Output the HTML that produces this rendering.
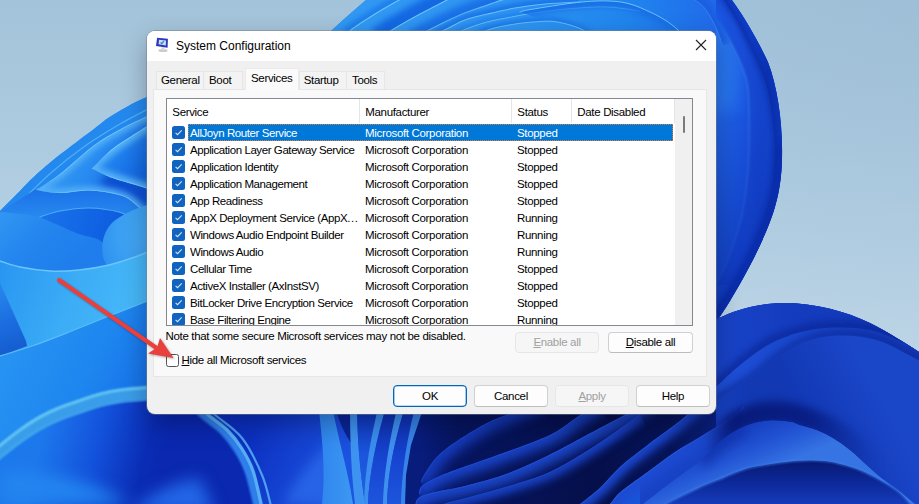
<!DOCTYPE html>
<html><head><meta charset="utf-8"><title>System Configuration</title>
<style>
html,body{margin:0;padding:0;}
body{width:919px;height:504px;overflow:hidden;position:relative;background:#b3cde2;font-family:"Liberation Sans",sans-serif;font-size:11.5px;letter-spacing:-0.33px;color:#000;}
#wall,#arrow{position:absolute;left:0;top:0;width:919px;height:504px;}
#arrow{z-index:5;pointer-events:none;}
#dlg{position:absolute;left:147px;top:31px;width:569px;height:382.5px;background:#f0f0f0;border-radius:8px;box-shadow:0 0 0 1px rgba(120,130,140,.5),0 10px 26px rgba(0,0,20,.3);overflow:hidden;}
#title{position:absolute;left:0;top:0;width:100%;height:30px;background:#fff;}
#title .ico{position:absolute;left:0;top:0;}
#title .t{position:absolute;left:29px;top:8px;font-size:12px;letter-spacing:0;}
#title .x{position:absolute;left:548px;top:8px;}
.tab{position:absolute;top:40px;height:19px;border:1px solid #e6e6e6;border-bottom:none;background:#f3f3f3;box-sizing:border-box;text-align:left;line-height:17px;}
.tab.sel{top:37px;height:22px;background:#fafafa;z-index:2;line-height:18px;border-color:#ebebeb;}
#panel{position:absolute;left:6px;top:58px;width:554px;height:288px;background:#f9f9f9;border:1px solid #e6e6e6;box-sizing:border-box;}
#list{position:absolute;left:19px;top:67px;width:527px;height:228px;background:#fff;border:1px solid #828790;box-sizing:border-box;overflow:hidden;}
.hd{position:absolute;top:0;height:24px;line-height:26px;border-right:1px solid #e5e5e5;box-sizing:border-box;padding-left:5.3px;}
.row{position:absolute;left:0;height:17px;width:508px;line-height:17px;white-space:nowrap;}
.row span{position:absolute;top:.7px;z-index:1;}
.row .cb{position:absolute;left:5px;top:2px;width:13px;height:13px;border-radius:2.5px;background:#1163c0;}
.row .cb svg{position:absolute;left:0;top:0;}
.row .hl{display:none;}
.row.sel .hl{display:block;position:absolute;left:21px;top:0;width:485px;height:17px;background:#0078d7;box-sizing:border-box;border:1px dotted #e07b39;}
.row.sel span{color:#fff;}
.c1{left:23px;letter-spacing:-.42px}.c2{left:198px}.c3{left:350px}
#sb{position:absolute;left:508px;top:0;width:17px;height:226px;background:#f0f0f0;}
#sb i{position:absolute;left:8px;top:17px;width:2px;height:17px;background:#7a7a7a;border-radius:1px;}
.note{position:absolute;left:18.5px;top:299px;white-space:nowrap;}
.hcb{position:absolute;left:19px;top:323px;width:13px;height:13px;box-sizing:border-box;border:1px solid #555;border-radius:2.5px;background:#fff;}
.hide{position:absolute;left:34.500px;top:322.7px;white-space:nowrap;}
.sep{position:absolute;left:0;top:341px;width:100%;height:0;}
.btn{position:absolute;height:21px;border:1px solid #d0d0d0;border-bottom-color:#bdbdbd;border-radius:4px;background:#fdfdfd;box-sizing:border-box;text-align:center;line-height:19px;}
.btn.dis{color:#a0a0a0;background:#f6f6f6;border-color:#e6e6e6;}
.btn.def{border:1px solid #0067c0;box-shadow:inset 0 0 0 .35px #0067c0;}
.btn.b2{height:22px;line-height:20.500px;}
u{text-decoration-thickness:1px;text-underline-offset:1px;}
.el{font-style:normal;letter-spacing:.6px;}

</style></head><body>
<svg id="wall" viewBox="0 0 919 504">
<defs>
<filter id="b1" filterUnits="userSpaceOnUse" x="-60" y="-60" width="1040" height="624" color-interpolation-filters="sRGB"><feGaussianBlur stdDeviation="1"/></filter>
<filter id="b2" filterUnits="userSpaceOnUse" x="-60" y="-60" width="1040" height="624" color-interpolation-filters="sRGB"><feGaussianBlur stdDeviation="2"/></filter>
<filter id="b3" filterUnits="userSpaceOnUse" x="-60" y="-60" width="1040" height="624" color-interpolation-filters="sRGB"><feGaussianBlur stdDeviation="3"/></filter>
<filter id="b4" filterUnits="userSpaceOnUse" x="-60" y="-60" width="1040" height="624" color-interpolation-filters="sRGB"><feGaussianBlur stdDeviation="4"/></filter>
<filter id="b6" filterUnits="userSpaceOnUse" x="-60" y="-60" width="1040" height="624" color-interpolation-filters="sRGB"><feGaussianBlur stdDeviation="6"/></filter>
<filter id="b8" filterUnits="userSpaceOnUse" x="-60" y="-60" width="1040" height="624" color-interpolation-filters="sRGB"><feGaussianBlur stdDeviation="8"/></filter>
<filter id="b14" filterUnits="userSpaceOnUse" x="-60" y="-60" width="1040" height="624" color-interpolation-filters="sRGB"><feGaussianBlur stdDeviation="14"/></filter>
<filter id="b20" filterUnits="userSpaceOnUse" x="-60" y="-60" width="1040" height="624" color-interpolation-filters="sRGB"><feGaussianBlur stdDeviation="20"/></filter>
<clipPath id="bloom"><path d="M366 0L732 0C748 22 760 45 768 62C778 88 783 125 782 160C781 200 770 225 754 258C740 285 728 305 719 318C735 310 760 303 783 303C815 303 845 311 870 323C890 333 905 343 919 352L919 504L0 504L0 211C8 203 14 197 20 191C30 180 38 173 46 166C60 154 70 147 79 140C90 132 98 126 105 120C120 110 135 102 147 97L331 31C342 21 354 10 366 0Z"/></clipPath>
<linearGradient id="bg" gradientUnits="userSpaceOnUse" x1="0" y1="0" x2="0" y2="504"><stop offset="0" stop-color="#a3c3da"/><stop offset="0.3" stop-color="#adcbe0"/><stop offset="0.6" stop-color="#bad3e5"/><stop offset="0.75" stop-color="#c0d7e7"/><stop offset="1" stop-color="#c0d7e7"/></linearGradient>
<radialGradient id="bg2" gradientUnits="userSpaceOnUse" cx="919" cy="0" r="380"><stop offset="0" stop-color="#98b9d3" stop-opacity="0.45"/><stop offset="1" stop-color="#98b9d3" stop-opacity="0"/></radialGradient>
<linearGradient id="base" gradientUnits="userSpaceOnUse" x1="0" y1="0" x2="919" y2="0"><stop offset="0" stop-color="#2289ef"/><stop offset="0.35" stop-color="#1f80ee"/><stop offset="0.6" stop-color="#1a5fe0"/><stop offset="1" stop-color="#103ac0"/></linearGradient>
<linearGradient id="p2" gradientUnits="userSpaceOnUse" x1="40" y1="150" x2="140" y2="215"><stop offset="0" stop-color="#3a9ef4"/><stop offset="0.4" stop-color="#2a8ef1"/><stop offset="0.75" stop-color="#1a70e8"/><stop offset="1" stop-color="#1260e0"/></linearGradient>
<clipPath id="c1"><path d="M36 190C40.0 187.3 50.5 181.3 60.0 174.0C69.5 166.7 83.2 153.3 93.0 146.0C102.8 138.7 111.3 134.3 119.0 130.0C126.7 125.7 132.2 123.3 139.0 120.0C145.8 116.7 156.5 111.7 160.0 110.0L160 110L160 228L160 228C155.8 224.0 141.8 209.5 135.0 204.0C128.2 198.5 126.7 197.2 119.0 195.0C111.3 192.8 98.8 190.8 89.0 190.5C79.2 190.2 68.8 193.1 60.0 193.0C51.2 192.9 40.0 190.5 36.0 190.0Z"/></clipPath>
<linearGradient id="u2" gradientUnits="userSpaceOnUse" x1="0" y1="190" x2="0" y2="222"><stop offset="0" stop-color="#1b72e8"/><stop offset="1" stop-color="#2a8cf0"/></linearGradient>
<linearGradient id="p1" gradientUnits="userSpaceOnUse" x1="92" y1="150" x2="160" y2="195"><stop offset="0" stop-color="#3a9cf4"/><stop offset="0.3" stop-color="#2080ee"/><stop offset="0.7" stop-color="#1266e2"/><stop offset="1" stop-color="#0e58da"/></linearGradient>
<clipPath id="c2"><path d="M92 168.5C95.2 165.4 104.7 155.2 111.0 150.0C117.3 144.8 121.8 142.3 130.0 137.0C138.2 131.7 155.0 121.2 160.0 118.0L160 118L160 193L160 193C156.5 191.8 147.2 188.6 139.0 186.0C130.8 183.4 118.8 180.4 111.0 177.5C103.2 174.6 95.2 170.0 92.0 168.5Z"/></clipPath>
<linearGradient id="p4" gradientUnits="userSpaceOnUse" x1="0" y1="214" x2="60" y2="275"><stop offset="0" stop-color="#3196f2"/><stop offset="0.5" stop-color="#2385ee"/><stop offset="1" stop-color="#1f7eec"/></linearGradient>
<linearGradient id="p3" gradientUnits="userSpaceOnUse" x1="40" y1="215" x2="135" y2="245"><stop offset="0" stop-color="#1a74ea"/><stop offset="0.5" stop-color="#1165e4"/><stop offset="1" stop-color="#0d56da"/></linearGradient>
<radialGradient id="lobe" gradientUnits="userSpaceOnUse" cx="160" cy="235" r="60"><stop offset="0" stop-color="#49acf5"/><stop offset="0.7" stop-color="#3b9ff3"/><stop offset="1" stop-color="#2f92f0"/></radialGradient>
<linearGradient id="r1" gradientUnits="userSpaceOnUse" x1="0" y1="265" x2="150" y2="320"><stop offset="0" stop-color="#2896f1"/><stop offset="0.5" stop-color="#3cadf6"/><stop offset="1" stop-color="#49bbf9"/></linearGradient>
<linearGradient id="dw" gradientUnits="userSpaceOnUse" x1="0" y1="290" x2="20" y2="350"><stop offset="0" stop-color="#2684ec"/><stop offset="0.5" stop-color="#1c6ee0"/><stop offset="1" stop-color="#155cd0"/></linearGradient>
<linearGradient id="r2" gradientUnits="userSpaceOnUse" x1="20" y1="340" x2="170" y2="420"><stop offset="0" stop-color="#2692f2"/><stop offset="0.45" stop-color="#1e86ef"/><stop offset="0.8" stop-color="#1670e8"/><stop offset="1" stop-color="#0f5ce0"/></linearGradient>
<linearGradient id="r3" gradientUnits="userSpaceOnUse" x1="45" y1="425" x2="165" y2="455"><stop offset="0" stop-color="#1d78ec"/><stop offset="0.45" stop-color="#1352dc"/><stop offset="0.85" stop-color="#0a2cb4"/><stop offset="1" stop-color="#0a28b0"/></linearGradient>
<linearGradient id="bm" gradientUnits="userSpaceOnUse" x1="150" y1="410" x2="330" y2="504"><stop offset="0" stop-color="#0a2cbc"/><stop offset="0.5" stop-color="#0c30c0"/><stop offset="1" stop-color="#1d55e2"/></linearGradient>
<linearGradient id="s1" gradientUnits="userSpaceOnUse" x1="320" y1="0" x2="352" y2="0"><stop offset="0" stop-color="#2f86ee"/><stop offset="1" stop-color="#3c97f2"/></linearGradient>
<linearGradient id="s2" gradientUnits="userSpaceOnUse" x1="0" y1="400" x2="0" y2="504"><stop offset="0" stop-color="#0c2cb0"/><stop offset="0.5" stop-color="#1a54dc"/><stop offset="1" stop-color="#2062e4"/></linearGradient>
<linearGradient id="s3" gradientUnits="userSpaceOnUse" x1="0" y1="400" x2="0" y2="504"><stop offset="0" stop-color="#0b2aa8"/><stop offset="0.6" stop-color="#1746d2"/><stop offset="1" stop-color="#1d55dc"/></linearGradient>
<linearGradient id="br" gradientUnits="userSpaceOnUse" x1="560" y1="504" x2="860" y2="320"><stop offset="0" stop-color="#07165c"/><stop offset="0.3" stop-color="#0a2290"/><stop offset="0.6" stop-color="#1034b2"/><stop offset="1" stop-color="#143cc0"/></linearGradient>
<linearGradient id="tl" gradientUnits="userSpaceOnUse" x1="700" y1="0" x2="919" y2="0"><stop offset="0" stop-color="#1a46cc"/><stop offset="0.4" stop-color="#143cbe"/><stop offset="1" stop-color="#1238b8"/></linearGradient>
<linearGradient id="sp" gradientUnits="userSpaceOnUse" x1="716" y1="0" x2="919" y2="0"><stop offset="0" stop-color="#1f50d8"/><stop offset="0.35" stop-color="#1a48cc"/><stop offset="1" stop-color="#1238b6"/></linearGradient>
<linearGradient id="tp" gradientUnits="userSpaceOnUse" x1="730" y1="430" x2="860" y2="360"><stop offset="0" stop-color="#1842c4"/><stop offset="0.25" stop-color="#1238b2"/><stop offset="0.5" stop-color="#1238b4"/><stop offset="1" stop-color="#1a46c8"/></linearGradient>
<linearGradient id="nz" gradientUnits="userSpaceOnUse" x1="420" y1="0" x2="716" y2="0"><stop offset="0" stop-color="#081c7c"/><stop offset="0.12" stop-color="#061560"/><stop offset="0.6" stop-color="#050f4a"/><stop offset="0.85" stop-color="#061458"/><stop offset="1" stop-color="#0a2080"/></linearGradient>
<clipPath id="c3"><path d="M421 482C421.5 480.8 421.5 479.0 424.0 475.0C426.5 471.0 431.0 463.3 436.0 458.0C441.0 452.7 445.5 448.8 454.0 443.0C462.5 437.2 477.8 427.8 487.0 423.0C496.2 418.2 500.2 417.5 509.0 414.0C517.8 410.5 534.8 404.0 540.0 402.0L540 402L840 1002L840 1002L809 1014L787 1023L754 1043L736 1058L724 1075L721 1082Z"/></clipPath>
<clipPath id="c4"><path d="M419 494C419.5 492.7 418.5 489.0 422.0 486.0C425.5 483.0 432.8 479.2 440.0 476.0C447.2 472.8 453.5 470.8 465.0 466.6C476.5 462.4 494.5 456.4 509.0 451.0C523.5 445.6 540.5 439.8 552.0 434.0C563.5 428.2 570.0 421.5 578.0 416.5C586.0 411.5 596.3 406.1 600.0 404.0L600 404L900 1004L900 1004L878 1016.5L852 1034L809 1051L765 1066.6L740 1076L722 1086L719 1094Z"/></clipPath>
<clipPath id="c5"><path d="M415 506C415.8 504.5 415.4 499.5 419.6 497.0C423.8 494.5 432.4 492.8 440.0 491.0C447.6 489.2 453.5 489.0 465.0 486.0C476.5 483.0 494.5 478.4 509.0 473.0C523.5 467.6 539.3 459.7 552.0 453.5C564.7 447.3 573.3 442.2 585.0 436.0C596.7 429.8 611.2 422.2 622.0 416.5C632.8 410.8 645.3 404.4 650.0 402.0L650 402L950 1002L950 1002L922 1016.5L885 1036L852 1053.5L809 1073L765 1086L740 1091L719.6 1097L715 1106Z"/></clipPath>
<clipPath id="c6"><path d="M430 512C432.2 510.7 436.8 506.5 443.5 504.0C450.2 501.5 459.1 500.0 470.0 497.0C480.9 494.0 495.3 490.3 509.0 486.0C522.7 481.7 536.8 478.2 552.0 471.0C567.2 463.8 585.3 452.1 600.0 442.6C614.7 433.1 633.3 418.8 640.0 414.0L640 414L940 1014L940 1014L900 1042.6L852 1071L809 1086L770 1097L743.5 1104L730 1112Z"/></clipPath>
<clipPath id="c7"><path d="M560 520C563.3 517.3 573.3 509.3 580.0 504.0C586.7 498.7 593.3 494.2 600.0 488.0C606.7 481.8 612.2 474.1 620.0 467.0C627.8 459.9 638.0 452.4 647.0 445.5C656.0 438.6 667.3 430.7 674.0 425.6C680.7 420.5 682.7 418.6 687.0 415.0C691.3 411.4 697.8 405.8 700.0 404.0L700 404L1000 1004L1000 1004L987 1015L974 1025.6L947 1045.5L920 1067L900 1088L880 1104L860 1120Z"/></clipPath>
<clipPath id="c8"><path d="M596 516C598.3 514.0 606.0 507.9 610.0 504.0C614.0 500.1 613.8 497.7 620.0 492.5C626.2 487.3 638.0 479.2 647.0 472.6C656.0 466.0 665.0 458.7 674.0 452.7C683.0 446.7 693.2 441.3 701.0 436.5C708.8 431.7 715.0 427.9 721.0 424.0C727.0 420.1 733.2 416.0 737.0 413.0C740.8 410.0 742.8 407.2 744.0 406.0L744 406L1044 1006L1044 1006L1037 1013L1021 1024L1001 1036.5L974 1052.7L947 1072.6L920 1092.5L910 1104L896 1116Z"/></clipPath>
<linearGradient id="shg" gradientUnits="userSpaceOnUse" x1="705" y1="0" x2="880" y2="0"><stop offset="0" stop-color="#081a78" stop-opacity="0.0"/><stop offset="0.15" stop-color="#081a78" stop-opacity="1"/><stop offset="0.6" stop-color="#081c80" stop-opacity="0.9"/><stop offset="1" stop-color="#0a2490" stop-opacity="0"/></linearGradient>
<linearGradient id="lp" gradientUnits="userSpaceOnUse" x1="755" y1="420" x2="775" y2="468"><stop offset="0" stop-color="#153ec0"/><stop offset="0.5" stop-color="#2254d4"/><stop offset="1" stop-color="#3674e4"/></linearGradient>
<clipPath id="c9"><path d="M625 520C628.0 517.3 634.8 510.7 643.0 504.0C651.2 497.3 664.3 487.3 674.0 480.0C683.7 472.7 693.0 466.7 701.0 460.0C709.0 453.3 714.7 445.7 722.0 440.0C729.3 434.3 737.3 429.2 745.0 426.0C752.7 422.8 760.4 421.2 768.0 420.5C775.6 419.8 785.2 420.9 790.5 421.7C795.8 422.4 795.6 423.6 800.0 425.0C804.4 426.4 811.2 427.8 816.7 430.0C822.2 432.2 827.5 434.7 833.0 438.0C838.5 441.3 844.4 445.5 850.0 450.0C855.6 454.5 861.7 460.6 866.7 465.0C871.7 469.4 875.6 473.1 880.0 476.7C884.4 480.3 888.3 483.1 893.0 486.7C897.7 490.2 903.5 494.4 908.0 498.0C912.5 501.6 918.0 506.3 920.0 508.0L920 530L625 530Z"/></clipPath>
<linearGradient id="bl" gradientUnits="userSpaceOnUse" x1="0" y1="462" x2="0" y2="506"><stop offset="0" stop-color="#081a74"/><stop offset="0.45" stop-color="#0c2898"/><stop offset="1" stop-color="#163cbc"/></linearGradient>
<clipPath id="rlc"><path d="M690 -10L732 0C748 22 760 45 768 62C778 88 783 125 782 160C781 200 770 225 754 258C740 285 728 305 719 318L690 335Z"/></clipPath>
<linearGradient id="rl" gradientUnits="userSpaceOnUse" x1="716" y1="0" x2="785" y2="0"><stop offset="0" stop-color="#2268ea"/><stop offset="0.35" stop-color="#1c58e2"/><stop offset="0.6" stop-color="#1648d4"/><stop offset="1" stop-color="#0e36bc"/></linearGradient>
<linearGradient id="e3" gradientUnits="userSpaceOnUse" x1="735" y1="0" x2="760" y2="0"><stop offset="0" stop-color="#1a50dc"/><stop offset="1" stop-color="#1444cc"/></linearGradient>
<linearGradient id="e2" gradientUnits="userSpaceOnUse" x1="750" y1="0" x2="785" y2="0"><stop offset="0" stop-color="#0f3cc4"/><stop offset="0.5" stop-color="#0c32b4"/><stop offset="1" stop-color="#0d36ba"/></linearGradient>
<linearGradient id="rld" gradientUnits="userSpaceOnUse" x1="0" y1="110" x2="0" y2="320"><stop offset="0" stop-color="#0c32b4" stop-opacity="0"/><stop offset="0.5" stop-color="#0c32b4" stop-opacity="0.45"/><stop offset="1" stop-color="#0b2eae" stop-opacity="0.8"/></linearGradient>
<linearGradient id="ts" gradientUnits="userSpaceOnUse" x1="330" y1="0" x2="735" y2="0"><stop offset="0" stop-color="#3199f3"/><stop offset="0.45" stop-color="#2f96f2"/><stop offset="0.72" stop-color="#2186ee"/><stop offset="0.86" stop-color="#2076ec"/><stop offset="0.95" stop-color="#226aea"/><stop offset="1" stop-color="#1c5ee4"/></linearGradient>
<clipPath id="c10"><path d="M343 40C344.3 38.3 345.7 34.3 351.0 30.0C356.3 25.7 367.0 19.0 375.0 14.0C383.0 9.0 393.5 3.2 399.0 0.0C404.5 -3.2 406.5 -4.2 408.0 -5.0L408 -5L208 -105L208 -105L199 -100L175 -86L151 -70L143 -60Z"/></clipPath>
<clipPath id="c11"><path d="M378 40C380.3 38.3 385.0 34.3 392.0 30.0C399.0 25.7 410.8 19.0 420.0 14.0C429.2 9.0 441.0 3.2 447.0 0.0C453.0 -3.2 454.5 -4.2 456.0 -5.0L456 -5L256 -105L256 -105L247 -100L220 -86L192 -70L178 -60Z"/></clipPath>
<clipPath id="c12"><path d="M412 40C414.8 38.3 421.0 34.2 429.0 30.0C437.0 25.8 450.2 19.2 460.0 15.0C469.8 10.8 480.6 7.5 487.6 5.0C494.6 2.5 497.4 1.5 502.0 0.0C506.6 -1.5 512.8 -3.3 515.0 -4.0L515 -4L315 -104L315 -104L302 -100L287.6 -95L260 -85L229 -70L212 -60Z"/></clipPath>
<clipPath id="c13"><path d="M425 40C428.2 38.3 437.8 33.3 444.5 30.0C451.2 26.7 457.8 22.7 465.0 20.0C472.2 17.3 479.3 16.0 487.6 14.0C495.9 12.0 505.4 9.7 515.0 8.0C524.6 6.3 534.2 5.0 545.0 4.0C555.8 3.0 574.2 2.3 580.0 2.0L580 2L480 -198L480 -198L445 -196L415 -192L387.6 -186L365 -180L344.5 -170L325 -160Z"/></clipPath>
<clipPath id="c14"><path d="M445 40C448.1 38.3 456.6 33.0 463.6 30.0C470.6 27.0 479.0 24.2 487.0 22.0C495.0 19.8 502.7 18.7 511.5 17.0C520.3 15.3 528.9 13.5 540.0 12.0C551.1 10.5 566.5 8.8 578.0 8.0C589.5 7.2 598.7 6.5 609.0 7.0C619.3 7.5 634.8 10.3 640.0 11.0L640 11L540 -189L540 -189L509 -193L478 -192L440 -188L411.5 -183L387 -178L363.6 -170L345 -160Z"/></clipPath>
<clipPath id="c15"><path d="M470 40C472.9 38.3 480.1 32.7 487.6 30.0C495.1 27.3 506.3 25.4 515.0 24.0C523.7 22.6 533.5 21.9 540.0 21.5C546.5 21.1 549.0 20.9 554.0 21.5C559.0 22.1 565.2 23.6 570.0 25.0C574.8 26.4 578.8 27.8 583.0 30.0C587.2 32.2 593.0 36.7 595.0 38.0L595 38L595 -162L595 -162L583 -170L570 -175L554 -178.5L540 -178.5L515 -176L487.6 -170L470 -160Z"/></clipPath>
<clipPath id="c16"><path d="M520 12C521.7 11.6 520.3 11.2 530.0 9.6C539.7 8.0 564.8 3.8 578.0 2.4C591.2 1.0 600.3 0.7 609.0 1.0C617.7 1.3 623.2 2.2 630.0 4.0C636.8 5.8 644.2 9.3 650.0 12.0C655.8 14.7 660.3 17.0 665.0 20.0C669.7 23.0 674.2 26.3 678.0 30.0C681.8 33.7 686.3 40.0 688.0 42.0L688 42L988 142L988 142L978 130L965 120L950 112L930 104L909 101L878 102.4L830 109.6L820 112Z"/></clipPath>
<clipPath id="c17"><path d="M680 -8C682.5 -6.7 690.7 -3.0 695.0 0.0C699.3 3.0 702.3 5.0 706.0 10.0C709.7 15.0 714.3 24.2 717.0 30.0C719.7 35.8 721.2 42.5 722.0 45.0L722 45L1022 45L1022 45L1017 30L1006 10L995 0L980 -8Z"/></clipPath>
</defs>
<rect width="919" height="504" fill="url(#bg)"/>
<rect x="500" width="419" height="400" fill="url(#bg2)"/>
<g clip-path="url(#bloom)">
<rect width="919" height="504" fill="url(#base)"/>
<path d="M0 504L0 200L160 80L160 504Z" fill="#2489ef"/>
<path d="M0 226C4.2 221.3 16.3 207.0 25.0 198.0C33.7 189.0 42.0 180.7 52.0 172.0C62.0 163.3 73.7 154.0 85.0 146.0C96.3 138.0 109.2 130.3 120.0 124.0C130.8 117.7 145.0 110.7 150.0 108.0" fill="none" stroke="#5db6f7" stroke-width="1.2" stroke-linecap="round" opacity="0.8"/>
<path d="M36 189C40.0 189.7 51.2 193.0 60.0 193.0C68.8 193.0 79.2 189.0 89.0 189.0C98.8 189.0 111.3 190.7 119.0 193.0C126.7 195.3 129.8 198.5 135.0 203.0C140.2 207.5 147.5 217.2 150.0 220.0L150 230L0 230L0 212Z" fill="url(#u2)"/>
<g clip-path="url(#c1)"><path d="M36 190C40.0 187.3 50.5 181.3 60.0 174.0C69.5 166.7 83.2 153.3 93.0 146.0C102.8 138.7 111.3 134.3 119.0 130.0C126.7 125.7 132.2 123.3 139.0 120.0C145.8 116.7 156.5 111.7 160.0 110.0L160 110L160 228L160 228C155.8 224.0 141.8 209.5 135.0 204.0C128.2 198.5 126.7 197.2 119.0 195.0C111.3 192.8 98.8 190.8 89.0 190.5C79.2 190.2 68.8 193.1 60.0 193.0C51.2 192.9 40.0 190.5 36.0 190.0Z" fill="url(#p2)"/><path d="M104 178C120 186 140 192 165 200" fill="none" stroke="#0d50d2" stroke-width="20" filter="url(#b4)"/><path d="M160 110C156.5 111.7 145.8 116.7 139.0 120.0C132.2 123.3 126.7 125.7 119.0 130.0C111.3 134.3 102.8 138.7 93.0 146.0C83.2 153.3 69.5 166.7 60.0 174.0C50.5 181.3 36.0 186.8 36.0 190.0C36.0 193.2 51.2 192.9 60.0 193.0C68.8 193.1 79.2 190.2 89.0 190.5C98.8 190.8 111.3 192.8 119.0 195.0C126.7 197.2 128.2 198.5 135.0 204.0C141.8 209.5 155.8 224.0 160.0 228.0" fill="none" stroke="#56b2f7" stroke-width="8" filter="url(#b3)"/><path d="M160 110C156.5 111.7 145.8 116.7 139.0 120.0C132.2 123.3 126.7 125.7 119.0 130.0C111.3 134.3 102.8 138.7 93.0 146.0C83.2 153.3 69.5 166.7 60.0 174.0C50.5 181.3 36.0 186.8 36.0 190.0C36.0 193.2 51.2 192.9 60.0 193.0C68.8 193.1 79.2 190.2 89.0 190.5C98.8 190.8 111.3 192.8 119.0 195.0C126.7 197.2 128.2 198.5 135.0 204.0C141.8 209.5 155.8 224.0 160.0 228.0" fill="none" stroke="#6cc2f9" stroke-width="1.6"/></g>
<g clip-path="url(#c2)"><path d="M92 168.5C95.2 165.4 104.7 155.2 111.0 150.0C117.3 144.8 121.8 142.3 130.0 137.0C138.2 131.7 155.0 121.2 160.0 118.0L160 118L160 193L160 193C156.5 191.8 147.2 188.6 139.0 186.0C130.8 183.4 118.8 180.4 111.0 177.5C103.2 174.6 95.2 170.0 92.0 168.5Z" fill="url(#p1)"/><path d="M160 118C155.0 121.2 138.2 131.7 130.0 137.0C121.8 142.3 117.3 144.8 111.0 150.0C104.7 155.2 92.0 163.9 92.0 168.5C92.0 173.1 103.2 174.6 111.0 177.5C118.8 180.4 130.8 183.4 139.0 186.0C147.2 188.6 156.5 191.8 160.0 193.0" fill="none" stroke="#58b4f7" stroke-width="10" filter="url(#b3)"/><path d="M160 118C155.0 121.2 138.2 131.7 130.0 137.0C121.8 142.3 117.3 144.8 111.0 150.0C104.7 155.2 92.0 163.9 92.0 168.5C92.0 173.1 103.2 174.6 111.0 177.5C118.8 180.4 130.8 183.4 139.0 186.0C147.2 188.6 156.5 191.8 160.0 193.0" fill="none" stroke="#74c8fa" stroke-width="1.8"/></g>
<path d="M0 212C3.3 212.3 13.3 213.2 20.0 214.0C26.7 214.8 33.3 215.0 40.0 217.0C46.7 219.0 53.5 223.2 60.0 226.0C66.5 228.8 72.5 231.7 79.0 234.0C85.5 236.3 92.2 237.3 99.0 240.0C105.8 242.7 116.5 248.3 120.0 250.0L160 250L160 275L0 275Z" fill="url(#p4)"/>
<path d="M40 217C43.3 216.0 51.8 212.5 60.0 211.0C68.2 209.5 79.2 207.8 89.0 208.0C98.8 208.2 111.3 210.0 119.0 212.0C126.7 214.0 129.8 216.7 135.0 220.0C140.2 223.3 147.5 230.0 150.0 232.0L150 260L110 250L110 250C108.2 248.3 104.2 242.7 99.0 240.0C93.8 237.3 85.5 236.3 79.0 234.0C72.5 231.7 66.5 228.8 60.0 226.0C53.5 223.2 43.3 218.5 40.0 217.0Z" fill="url(#p3)"/>
<path d="M40 217C43.3 216.0 51.8 212.5 60.0 211.0C68.2 209.5 79.2 207.8 89.0 208.0C98.8 208.2 111.3 210.0 119.0 212.0C126.7 214.0 132.3 218.7 135.0 220.0" fill="none" stroke="#4eaaf5" stroke-width="1.2" stroke-linecap="round"/>
<path d="M160 200C158.3 200.7 155.2 202.0 150.0 204.0C144.8 206.0 135.5 208.7 129.0 212.0C122.5 215.3 115.3 219.3 111.0 224.0C106.7 228.7 104.3 234.7 103.0 240.0C101.7 245.3 102.3 251.8 103.0 256.0C103.7 260.2 105.0 261.8 107.0 265.0C109.0 268.2 113.7 273.3 115.0 275.0L160 275Z" fill="url(#lobe)"/>
<path d="M0 261C3.3 262.0 11.7 265.3 20.0 267.0C28.3 268.7 40.2 270.5 50.0 271.0C59.8 271.5 69.2 271.0 79.0 270.0C88.8 269.0 99.7 267.2 109.0 265.0C118.3 262.8 126.5 260.0 135.0 257.0C143.5 254.0 155.8 248.7 160.0 247.0L160 360L0 360Z" fill="url(#r1)"/>
<path d="M0 261C3.3 262.0 11.7 265.3 20.0 267.0C28.3 268.7 40.2 270.5 50.0 271.0C59.8 271.5 69.2 271.0 79.0 270.0C88.8 269.0 99.7 267.2 109.0 265.0C118.3 262.8 126.5 260.0 135.0 257.0C143.5 254.0 155.8 248.7 160.0 247.0" fill="none" stroke="#6cc6fa" stroke-width="1.5" stroke-linecap="round"/>
<path d="M-2 282L0 283L26 341L27 346L-2 357Z" fill="url(#dw)"/>
<path d="M0 356C5.3 354.3 20.5 350.0 32.0 346.0C43.5 342.0 56.2 337.0 69.0 332.0C81.8 327.0 93.8 322.0 109.0 316.0C124.2 310.0 151.5 299.3 160.0 296.0L160 460L0 460Z" fill="url(#r2)"/>
<path d="M0 356C5.3 354.3 20.5 350.0 32.0 346.0C43.5 342.0 56.2 337.0 69.0 332.0C81.8 327.0 93.8 322.0 109.0 316.0C124.2 310.0 151.5 299.3 160.0 296.0" fill="none" stroke="#5cbcf8" stroke-width="1.3" stroke-linecap="round"/>
<path d="M0 450C6.7 445.0 26.7 427.7 40.0 420.0C53.3 412.3 66.7 408.3 80.0 404.0C93.3 399.7 106.7 396.3 120.0 394.0C133.3 391.7 145.0 390.3 160.0 390.0C175.0 389.7 201.7 391.7 210.0 392.0L260 504L0 504Z" fill="url(#r3)"/>
<path d="M0 504L0 470C40 470 90 480 130 504Z" fill="#2384ef" filter="url(#b8)"/>
<path d="M-6 456.5C-5.0 455.7 -4.3 454.9 0.0 451.5C4.3 448.1 13.3 440.8 20.0 436.0C26.7 431.2 33.3 426.8 40.0 423.0C46.7 419.2 53.3 416.2 60.0 413.5C66.7 410.8 73.3 408.8 80.0 406.5C86.7 404.2 93.3 401.8 100.0 400.0C106.7 398.2 112.2 397.1 120.0 396.0C127.8 394.9 140.3 394.0 147.0 393.5C153.7 393.0 157.8 393.1 160.0 393.0" fill="none" stroke="#3a9de9" stroke-width="13" stroke-linecap="round" filter="url(#b1)"/>
<path d="M-6 462.5C-5.0 461.7 -4.3 460.9 0.0 457.5C4.3 454.1 13.3 446.8 20.0 442.0C26.7 437.2 33.3 432.8 40.0 429.0C46.7 425.2 53.3 422.2 60.0 419.5C66.7 416.8 73.3 414.8 80.0 412.5C86.7 410.2 93.3 407.8 100.0 406.0C106.7 404.2 112.2 403.1 120.0 402.0C127.8 400.9 140.3 400.0 147.0 399.5C153.7 399.0 157.8 399.1 160.0 399.0" fill="none" stroke="#49adf0" stroke-width="1.6" stroke-linecap="round" filter="url(#b1)" opacity="0.8"/>
<path d="M-6 450.5C-5.0 449.7 -4.3 448.9 0.0 445.5C4.3 442.1 13.3 434.8 20.0 430.0C26.7 425.2 33.3 420.8 40.0 417.0C46.7 413.2 53.3 410.2 60.0 407.5C66.7 404.8 73.3 402.8 80.0 400.5C86.7 398.2 93.3 395.8 100.0 394.0C106.7 392.2 112.2 391.1 120.0 390.0C127.8 388.9 140.3 388.0 147.0 387.5C153.7 387.0 157.8 387.1 160.0 387.0" fill="none" stroke="#68ccf6" stroke-width="2.6" stroke-linecap="round" filter="url(#b1)"/>
<path d="M190 380L560 380L560 504L258 504C250 470 238 448 224 430C212 415 204 405 190 392Z" fill="url(#bm)"/>
<path d="M130 514C150 492 175 482 200 478L215 514Z" fill="#2266e6" filter="url(#b8)"/>
<path d="M190 400C192.2 402.3 197.5 409.0 203.0 414.0C208.5 419.0 217.2 424.2 223.0 430.0C228.8 435.8 233.7 442.2 238.0 449.0C242.3 455.8 245.7 461.5 249.0 471.0C252.3 480.5 256.5 500.2 258.0 506.0" fill="none" stroke="#2f7feb" stroke-width="9" stroke-linecap="round" filter="url(#b1)"/>
<path d="M196 400C197.8 402.3 201.8 409.0 207.0 414.0C212.2 419.0 221.2 424.2 227.0 430.0C232.8 435.8 237.7 442.2 242.0 449.0C246.3 455.8 249.8 461.5 253.0 471.0C256.2 480.5 260.1 500.2 261.5 506.0" fill="none" stroke="#58aef3" stroke-width="3.2" stroke-linecap="round"/>
<path d="M204 404C205.7 405.7 207.7 408.3 214.0 414.0C220.3 419.7 234.0 427.8 242.0 438.0C250.0 448.2 257.2 463.7 262.0 475.0C266.8 486.3 269.5 500.8 271.0 506.0" fill="none" stroke="#4d9ff0" stroke-width="2.2" stroke-linecap="round"/>
<path d="M285 504C295 480 312 462 332 440L345 504Z" fill="#2763e6" filter="url(#b6)"/>
<path d="M318 400C322 440 326 470 322 504L353 504C348 470 338 440 331 400Z" fill="url(#s1)"/>
<path d="M333 400L356 400L353 446C345 435 338 420 333 400Z" fill="#0a2596"/>
<path d="M350 400L357 400C357 440 360 470 365 504L355 504C351 470 350 440 350 400Z" fill="#3e93f0"/>
<path d="M357 400L384 400C372 440 366 470 366 504L365 504C360 470 357 440 357 400Z" fill="url(#s2)"/>
<path d="M380 400L388 400C376 440 369 475 368 504L364 504C365 470 370 440 380 400Z" fill="#3b8eee"/>
<path d="M388 400L402 400C390 440 385 475 385 504L368 504C369 475 376 440 388 400Z" fill="url(#s3)"/>
<path d="M399 400L407 400C393 445 388 475 387 504L383 504C384 475 388 445 399 400Z" fill="#3f90ee"/>
<path d="M407 400L420 400C407 445 403 475 403 504L387 504C388 475 393 445 407 400Z" fill="url(#s3)"/>
<path d="M417 400L426 400C411 445 406 475 405 504L401 504C402 475 405 445 417 400Z" fill="#3684e8"/>
<path d="M640 300L919 300L919 504L640 504Z" fill="url(#br)"/>
<path d="M700 330C703.2 328.0 711.0 321.8 719.0 318.0C727.0 314.2 737.3 309.5 748.0 307.0C758.7 304.5 771.2 303.3 783.0 303.0C794.8 302.7 807.0 302.8 819.0 305.0C831.0 307.2 843.0 311.2 855.0 316.0C867.0 320.8 879.3 327.5 891.0 334.0C902.7 340.5 919.3 351.5 925.0 355.0L925 510L700 510Z" fill="url(#tl)"/>
<path d="M716 385C720.0 381.3 731.2 370.2 740.0 363.0C748.8 355.8 758.8 347.5 769.0 342.0C779.2 336.5 790.2 332.8 801.0 330.0C811.8 327.2 822.5 325.3 834.0 325.0C845.5 324.7 855.8 324.2 870.0 328.0C884.2 331.8 910.8 344.7 919.0 348.0" fill="none" stroke="#0b2798" stroke-width="9" stroke-linecap="round" filter="url(#b3)" opacity="0.75"/>
<path d="M700 402C702.7 399.5 709.3 393.2 716.0 387.0C722.7 380.8 731.2 372.1 740.0 365.0C748.8 357.9 758.8 350.0 769.0 344.5C779.2 339.0 790.2 334.8 801.0 332.0C811.8 329.2 822.5 327.8 834.0 327.5C845.5 327.2 859.0 327.8 870.0 330.0C881.0 332.2 890.8 337.2 900.0 341.0C909.2 344.8 920.8 351.0 925.0 353.0L925 510L700 510Z" fill="url(#sp)"/>
<path d="M716 399C722.2 395.0 742.2 382.7 753.0 375.0C763.8 367.3 771.7 359.1 781.0 353.0C790.3 346.9 798.8 341.8 809.0 338.5C819.2 335.2 830.5 333.5 842.0 333.5C853.5 333.5 865.2 334.2 878.0 338.5C890.8 342.8 912.2 355.6 919.0 359.0" fill="none" stroke="#0b2694" stroke-width="6" stroke-linecap="round" filter="url(#b3)" opacity="0.7"/>
<path d="M640 470C645.0 465.0 660.0 449.3 670.0 440.0C680.0 430.7 692.3 420.5 700.0 414.0C707.7 407.5 707.2 407.2 716.0 401.0C724.8 394.8 742.2 384.7 753.0 377.0C763.8 369.3 771.7 361.1 781.0 355.0C790.3 348.9 798.8 343.7 809.0 340.5C819.2 337.3 830.5 335.6 842.0 335.6C853.5 335.6 867.5 337.6 878.0 340.5C888.5 343.4 897.2 349.1 905.0 353.0C912.8 356.9 921.7 362.2 925.0 364.0L925 510L640 510Z" fill="url(#tp)"/>
<path d="M405 510L406 475L411 445L426 400L716 400L716 427L716 427C713.5 428.6 708.0 432.2 701.0 436.5C694.0 440.8 683.0 446.7 674.0 452.7C665.0 458.7 656.0 466.0 647.0 472.6C638.0 479.2 626.2 487.3 620.0 492.5C613.8 497.7 614.0 500.1 610.0 504.0C606.0 507.9 598.3 514.0 596.0 516.0L596 516L405 516Z" fill="url(#nz)"/>
<g clip-path="url(#c3)"><path d="M421 482C421.5 480.8 421.5 479.0 424.0 475.0C426.5 471.0 431.0 463.3 436.0 458.0C441.0 452.7 445.5 448.8 454.0 443.0C462.5 437.2 477.8 427.8 487.0 423.0C496.2 418.2 500.2 417.5 509.0 414.0C517.8 410.5 534.8 404.0 540.0 402.0" fill="none" stroke="#163cbc" stroke-width="18" filter="url(#b6)" opacity="1"/><path d="M421 482C421.5 480.8 421.5 479.0 424.0 475.0C426.5 471.0 431.0 463.3 436.0 458.0C441.0 452.7 445.5 448.8 454.0 443.0C462.5 437.2 477.8 427.8 487.0 423.0C496.2 418.2 500.2 417.5 509.0 414.0C517.8 410.5 534.8 404.0 540.0 402.0" fill="none" stroke="#1a42c4" stroke-width="2"/></g>
<g clip-path="url(#c4)"><path d="M419 494C419.5 492.7 418.5 489.0 422.0 486.0C425.5 483.0 432.8 479.2 440.0 476.0C447.2 472.8 453.5 470.8 465.0 466.6C476.5 462.4 494.5 456.4 509.0 451.0C523.5 445.6 540.5 439.8 552.0 434.0C563.5 428.2 570.0 421.5 578.0 416.5C586.0 411.5 596.3 406.1 600.0 404.0" fill="none" stroke="#1a44c8" stroke-width="18" filter="url(#b6)" opacity="1"/><path d="M419 494C419.5 492.7 418.5 489.0 422.0 486.0C425.5 483.0 432.8 479.2 440.0 476.0C447.2 472.8 453.5 470.8 465.0 466.6C476.5 462.4 494.5 456.4 509.0 451.0C523.5 445.6 540.5 439.8 552.0 434.0C563.5 428.2 570.0 421.5 578.0 416.5C586.0 411.5 596.3 406.1 600.0 404.0" fill="none" stroke="#1e4ad0" stroke-width="2"/></g>
<g clip-path="url(#c5)"><path d="M415 506C415.8 504.5 415.4 499.5 419.6 497.0C423.8 494.5 432.4 492.8 440.0 491.0C447.6 489.2 453.5 489.0 465.0 486.0C476.5 483.0 494.5 478.4 509.0 473.0C523.5 467.6 539.3 459.7 552.0 453.5C564.7 447.3 573.3 442.2 585.0 436.0C596.7 429.8 611.2 422.2 622.0 416.5C632.8 410.8 645.3 404.4 650.0 402.0" fill="none" stroke="#1c48cc" stroke-width="18" filter="url(#b6)" opacity="1"/><path d="M415 506C415.8 504.5 415.4 499.5 419.6 497.0C423.8 494.5 432.4 492.8 440.0 491.0C447.6 489.2 453.5 489.0 465.0 486.0C476.5 483.0 494.5 478.4 509.0 473.0C523.5 467.6 539.3 459.7 552.0 453.5C564.7 447.3 573.3 442.2 585.0 436.0C596.7 429.8 611.2 422.2 622.0 416.5C632.8 410.8 645.3 404.4 650.0 402.0" fill="none" stroke="#204ed2" stroke-width="2"/></g>
<g clip-path="url(#c6)"><path d="M430 512C432.2 510.7 436.8 506.5 443.5 504.0C450.2 501.5 459.1 500.0 470.0 497.0C480.9 494.0 495.3 490.3 509.0 486.0C522.7 481.7 536.8 478.2 552.0 471.0C567.2 463.8 585.3 452.1 600.0 442.6C614.7 433.1 633.3 418.8 640.0 414.0" fill="none" stroke="#1840c0" stroke-width="14" filter="url(#b4)" opacity="1"/><path d="M430 512C432.2 510.7 436.8 506.5 443.5 504.0C450.2 501.5 459.1 500.0 470.0 497.0C480.9 494.0 495.3 490.3 509.0 486.0C522.7 481.7 536.8 478.2 552.0 471.0C567.2 463.8 585.3 452.1 600.0 442.6C614.7 433.1 633.3 418.8 640.0 414.0" fill="none" stroke="#1a44c4" stroke-width="2"/></g>
<g clip-path="url(#c7)"><path d="M560 520C563.3 517.3 573.3 509.3 580.0 504.0C586.7 498.7 593.3 494.2 600.0 488.0C606.7 481.8 612.2 474.1 620.0 467.0C627.8 459.9 638.0 452.4 647.0 445.5C656.0 438.6 667.3 430.7 674.0 425.6C680.7 420.5 682.7 418.6 687.0 415.0C691.3 411.4 697.8 405.8 700.0 404.0" fill="none" stroke="#1a46cc" stroke-width="16" filter="url(#b4)" opacity="1"/><path d="M560 520C563.3 517.3 573.3 509.3 580.0 504.0C586.7 498.7 593.3 494.2 600.0 488.0C606.7 481.8 612.2 474.1 620.0 467.0C627.8 459.9 638.0 452.4 647.0 445.5C656.0 438.6 667.3 430.7 674.0 425.6C680.7 420.5 682.7 418.6 687.0 415.0C691.3 411.4 697.8 405.8 700.0 404.0" fill="none" stroke="#2050d4" stroke-width="2"/></g>
<g clip-path="url(#c8)"><path d="M596 516C598.3 514.0 606.0 507.9 610.0 504.0C614.0 500.1 613.8 497.7 620.0 492.5C626.2 487.3 638.0 479.2 647.0 472.6C656.0 466.0 665.0 458.7 674.0 452.7C683.0 446.7 693.2 441.3 701.0 436.5C708.8 431.7 715.0 427.9 721.0 424.0C727.0 420.1 733.2 416.0 737.0 413.0C740.8 410.0 742.8 407.2 744.0 406.0" fill="none" stroke="#1c4ad0" stroke-width="22" filter="url(#b6)" opacity="1"/><path d="M596 516C598.3 514.0 606.0 507.9 610.0 504.0C614.0 500.1 613.8 497.7 620.0 492.5C626.2 487.3 638.0 479.2 647.0 472.6C656.0 466.0 665.0 458.7 674.0 452.7C683.0 446.7 693.2 441.3 701.0 436.5C708.8 431.7 715.0 427.9 721.0 424.0C727.0 420.1 733.2 416.0 737.0 413.0C740.8 410.0 742.8 407.2 744.0 406.0" fill="none" stroke="#2456da" stroke-width="2"/></g>
<path d="M701 452C704.5 448.7 714.7 437.7 722.0 432.0C729.3 426.3 737.3 421.2 745.0 418.0C752.7 414.8 760.4 413.2 768.0 412.5C775.6 411.8 782.4 412.1 790.5 413.7C798.6 415.3 809.6 419.3 816.7 422.0C823.8 424.7 827.5 426.7 833.0 430.0C838.5 433.3 844.4 437.5 850.0 442.0C855.6 446.5 861.7 452.6 866.7 457.0C871.7 461.4 877.8 466.8 880.0 468.7" fill="none" stroke="url(#shg)" stroke-width="22" stroke-linecap="round" filter="url(#b4)"/>
<g clip-path="url(#c9)"><path d="M625 520C628.0 517.3 634.8 510.7 643.0 504.0C651.2 497.3 664.3 487.3 674.0 480.0C683.7 472.7 693.0 466.7 701.0 460.0C709.0 453.3 714.7 445.7 722.0 440.0C729.3 434.3 737.3 429.2 745.0 426.0C752.7 422.8 760.4 421.2 768.0 420.5C775.6 419.8 785.2 420.9 790.5 421.7C795.8 422.4 795.6 423.6 800.0 425.0C804.4 426.4 811.2 427.8 816.7 430.0C822.2 432.2 827.5 434.7 833.0 438.0C838.5 441.3 844.4 445.5 850.0 450.0C855.6 454.5 861.7 460.6 866.7 465.0C871.7 469.4 875.6 473.1 880.0 476.7C884.4 480.3 888.3 483.1 893.0 486.7C897.7 490.2 903.5 494.4 908.0 498.0C912.5 501.6 918.0 506.3 920.0 508.0L920 530L625 530Z" fill="url(#lp)"/><path d="M701 462C704.5 458.7 714.7 447.7 722.0 442.0C729.3 436.3 741.2 430.3 745.0 428.0" fill="none" stroke="#1234b0" stroke-width="14" filter="url(#b6)"/></g>
<path d="M640 520C644.3 517.3 656.3 509.3 666.0 504.0C675.7 498.7 688.6 492.3 698.0 488.0C707.4 483.7 714.8 481.2 722.6 478.0C730.4 474.8 737.4 471.2 745.0 469.0C752.6 466.8 759.7 465.9 768.0 464.6C776.3 463.3 785.5 461.6 795.0 461.0C804.5 460.4 815.8 460.1 825.0 461.0C834.2 461.9 843.0 464.7 850.0 466.7C857.0 468.7 861.2 470.5 866.7 473.0C872.2 475.5 877.5 478.4 883.0 481.7C888.5 485.0 895.2 488.9 900.0 493.0C904.8 497.1 910.0 503.8 912.0 506.0L912 530L640 530Z" fill="url(#bl)"/>
<path d="M640 520C644.3 517.3 656.3 509.3 666.0 504.0C675.7 498.7 688.6 492.3 698.0 488.0C707.4 483.7 714.8 481.2 722.6 478.0C730.4 474.8 737.4 471.2 745.0 469.0C752.6 466.8 759.7 465.9 768.0 464.6C776.3 463.3 785.5 461.6 795.0 461.0C804.5 460.4 815.8 460.1 825.0 461.0C834.2 461.9 843.0 464.7 850.0 466.7C857.0 468.7 861.2 470.5 866.7 473.0C872.2 475.5 877.5 478.4 883.0 481.7C888.5 485.0 895.2 488.9 900.0 493.0C904.8 497.1 910.0 503.8 912.0 506.0" fill="none" stroke="#3f80ea" stroke-width="1.4" stroke-linecap="round" filter="url(#b1)" opacity="0.9"/>
<g clip-path="url(#rlc)">
<path d="M690 0L800 0L800 330L690 330Z" fill="url(#rl)"/>
<path d="M700 0L730 0C740 30 745 60 735 110L700 110Z" fill="#2a7af0" filter="url(#b8)" opacity="0.8"/>
<path d="M700 -5C701.7 -2.5 705.0 2.5 710.0 10.0C715.0 17.5 724.0 28.7 730.0 40.0C736.0 51.3 742.8 66.2 746.0 78.0C749.2 89.8 748.7 95.7 749.0 111.0C749.3 126.3 749.2 152.7 748.0 170.0C746.8 187.3 745.3 200.0 742.0 215.0C738.7 230.0 732.3 248.3 728.0 260.0C723.7 271.7 718.0 280.8 716.0 285.0L800 285L800 -5Z" fill="url(#e3)"/>
<path d="M700 -5C701.7 -2.5 705.0 2.5 710.0 10.0C715.0 17.5 724.0 28.7 730.0 40.0C736.0 51.3 742.8 66.2 746.0 78.0C749.2 89.8 748.7 95.7 749.0 111.0C749.3 126.3 749.2 152.7 748.0 170.0C746.8 187.3 745.3 200.0 742.0 215.0C738.7 230.0 732.3 248.3 728.0 260.0C723.7 271.7 718.0 280.8 716.0 285.0" fill="none" stroke="#3a80ee" stroke-width="1.2" stroke-linecap="round" filter="url(#b1)" opacity="0.8"/>
<path d="M722 -5C722.3 -4.2 720.3 -6.5 724.0 0.0C727.7 6.5 737.0 20.0 744.0 34.0C751.0 48.0 761.0 67.2 766.0 84.0C771.0 100.8 772.7 120.7 774.0 135.0C775.3 149.3 775.0 158.3 774.0 170.0C773.0 181.7 771.2 193.3 768.0 205.0C764.8 216.7 760.0 228.3 755.0 240.0C750.0 251.7 743.5 265.0 738.0 275.0C732.5 285.0 726.3 293.2 722.0 300.0C717.7 306.8 713.7 313.3 712.0 316.0L800 316L800 -5Z" fill="url(#e2)"/>
<path d="M722 -5C722.3 -4.2 720.3 -6.5 724.0 0.0C727.7 6.5 737.0 20.0 744.0 34.0C751.0 48.0 761.0 67.2 766.0 84.0C771.0 100.8 772.7 120.7 774.0 135.0C775.3 149.3 775.0 158.3 774.0 170.0C773.0 181.7 771.2 193.3 768.0 205.0C764.8 216.7 760.0 228.3 755.0 240.0C750.0 251.7 743.5 265.0 738.0 275.0C732.5 285.0 726.3 293.2 722.0 300.0C717.7 306.8 713.7 313.3 712.0 316.0" fill="none" stroke="#0a2a9c" stroke-width="4" stroke-linecap="round" filter="url(#b2)" opacity="0.7"/>
<path d="M690 100L800 100L800 335L690 335Z" fill="url(#rld)"/>
<path d="M782 150C781.7 156.7 782.2 177.5 780.0 190.0C777.8 202.5 773.3 213.3 769.0 225.0C764.7 236.7 759.5 248.8 754.0 260.0C748.5 271.2 741.8 282.3 736.0 292.0C730.2 301.7 721.8 313.7 719.0 318.0" fill="none" stroke="#0a2aa4" stroke-width="14" stroke-linecap="round" filter="url(#b3)" opacity="0.55"/>
</g>
<path d="M320 -5L716 -5L716 60L320 60Z" fill="url(#ts)"/>
<g clip-path="url(#c10)"><path d="M343 40C344.3 38.3 345.7 34.3 351.0 30.0C356.3 25.7 367.0 19.0 375.0 14.0C383.0 9.0 393.5 3.2 399.0 0.0C404.5 -3.2 406.5 -4.2 408.0 -5.0" fill="none" stroke="#1f80ec" stroke-width="12" filter="url(#b2)" opacity="1"/></g>
<path d="M343 40C344.3 38.3 345.7 34.3 351.0 30.0C356.3 25.7 367.0 19.0 375.0 14.0C383.0 9.0 393.5 3.2 399.0 0.0C404.5 -3.2 406.5 -4.2 408.0 -5.0" fill="none" stroke="#74c8fa" stroke-width="1.1" stroke-linecap="round" opacity="0.9"/>
<g clip-path="url(#c11)"><path d="M378 40C380.3 38.3 385.0 34.3 392.0 30.0C399.0 25.7 410.8 19.0 420.0 14.0C429.2 9.0 441.0 3.2 447.0 0.0C453.0 -3.2 454.5 -4.2 456.0 -5.0" fill="none" stroke="#1468e2" stroke-width="24" filter="url(#b3)" opacity="1"/></g>
<path d="M378 40C380.3 38.3 385.0 34.3 392.0 30.0C399.0 25.7 410.8 19.0 420.0 14.0C429.2 9.0 441.0 3.2 447.0 0.0C453.0 -3.2 454.5 -4.2 456.0 -5.0" fill="none" stroke="#74c8fa" stroke-width="1.1" stroke-linecap="round" opacity="0.9"/>
<g clip-path="url(#c12)"><path d="M412 40C414.8 38.3 421.0 34.2 429.0 30.0C437.0 25.8 450.2 19.2 460.0 15.0C469.8 10.8 480.6 7.5 487.6 5.0C494.6 2.5 497.4 1.5 502.0 0.0C506.6 -1.5 512.8 -3.3 515.0 -4.0" fill="none" stroke="#1a70e6" stroke-width="18" filter="url(#b3)" opacity="1"/></g>
<path d="M412 40C414.8 38.3 421.0 34.2 429.0 30.0C437.0 25.8 450.2 19.2 460.0 15.0C469.8 10.8 480.6 7.5 487.6 5.0C494.6 2.5 497.4 1.5 502.0 0.0C506.6 -1.5 512.8 -3.3 515.0 -4.0" fill="none" stroke="#74c8fa" stroke-width="1.1" stroke-linecap="round" opacity="0.9"/>
<g clip-path="url(#c13)"><path d="M425 40C428.2 38.3 437.8 33.3 444.5 30.0C451.2 26.7 457.8 22.7 465.0 20.0C472.2 17.3 479.3 16.0 487.6 14.0C495.9 12.0 505.4 9.7 515.0 8.0C524.6 6.3 534.2 5.0 545.0 4.0C555.8 3.0 574.2 2.3 580.0 2.0" fill="none" stroke="#1c76e8" stroke-width="10" filter="url(#b2)" opacity="1"/></g>
<path d="M425 40C428.2 38.3 437.8 33.3 444.5 30.0C451.2 26.7 457.8 22.7 465.0 20.0C472.2 17.3 479.3 16.0 487.6 14.0C495.9 12.0 505.4 9.7 515.0 8.0C524.6 6.3 534.2 5.0 545.0 4.0C555.8 3.0 574.2 2.3 580.0 2.0" fill="none" stroke="#74c8fa" stroke-width="1.1" stroke-linecap="round" opacity="0.9"/>
<g clip-path="url(#c14)"><path d="M445 40C448.1 38.3 456.6 33.0 463.6 30.0C470.6 27.0 479.0 24.2 487.0 22.0C495.0 19.8 502.7 18.7 511.5 17.0C520.3 15.3 528.9 13.5 540.0 12.0C551.1 10.5 566.5 8.8 578.0 8.0C589.5 7.2 598.7 6.5 609.0 7.0C619.3 7.5 634.8 10.3 640.0 11.0" fill="none" stroke="#2384ec" stroke-width="8" filter="url(#b2)" opacity="1"/></g>
<path d="M445 40C448.1 38.3 456.6 33.0 463.6 30.0C470.6 27.0 479.0 24.2 487.0 22.0C495.0 19.8 502.7 18.7 511.5 17.0C520.3 15.3 528.9 13.5 540.0 12.0C551.1 10.5 566.5 8.8 578.0 8.0C589.5 7.2 598.7 6.5 609.0 7.0C619.3 7.5 634.8 10.3 640.0 11.0" fill="none" stroke="#74c8fa" stroke-width="0.9" stroke-linecap="round" opacity="0.9"/>
<g clip-path="url(#c15)"><path d="M470 40C472.9 38.3 480.1 32.7 487.6 30.0C495.1 27.3 506.3 25.4 515.0 24.0C523.7 22.6 533.5 21.9 540.0 21.5C546.5 21.1 549.0 20.9 554.0 21.5C559.0 22.1 565.2 23.6 570.0 25.0C574.8 26.4 578.8 27.8 583.0 30.0C587.2 32.2 593.0 36.7 595.0 38.0" fill="none" stroke="#1c7aea" stroke-width="8" filter="url(#b2)" opacity="1"/></g>
<path d="M470 40C472.9 38.3 480.1 32.7 487.6 30.0C495.1 27.3 506.3 25.4 515.0 24.0C523.7 22.6 533.5 21.9 540.0 21.5C546.5 21.1 549.0 20.9 554.0 21.5C559.0 22.1 565.2 23.6 570.0 25.0C574.8 26.4 578.8 27.8 583.0 30.0C587.2 32.2 593.0 36.7 595.0 38.0" fill="none" stroke="#74c8fa" stroke-width="0.9" stroke-linecap="round" opacity="0.9"/>
<g clip-path="url(#c16)"><path d="M520 12C521.7 11.6 520.3 11.2 530.0 9.6C539.7 8.0 564.8 3.8 578.0 2.4C591.2 1.0 600.3 0.7 609.0 1.0C617.7 1.3 623.2 2.2 630.0 4.0C636.8 5.8 644.2 9.3 650.0 12.0C655.8 14.7 660.3 17.0 665.0 20.0C669.7 23.0 674.2 26.3 678.0 30.0C681.8 33.7 686.3 40.0 688.0 42.0" fill="none" stroke="#1870e6" stroke-width="12" filter="url(#b3)" opacity="1"/></g>
<path d="M520 12C521.7 11.6 520.3 11.2 530.0 9.6C539.7 8.0 564.8 3.8 578.0 2.4C591.2 1.0 600.3 0.7 609.0 1.0C617.7 1.3 623.2 2.2 630.0 4.0C636.8 5.8 644.2 9.3 650.0 12.0C655.8 14.7 660.3 17.0 665.0 20.0C669.7 23.0 674.2 26.3 678.0 30.0C681.8 33.7 686.3 40.0 688.0 42.0" fill="none" stroke="#74c8fa" stroke-width="1" stroke-linecap="round" opacity="0.9"/>
<g clip-path="url(#c17)"><path d="M680 -8C682.5 -6.7 690.7 -3.0 695.0 0.0C699.3 3.0 702.3 5.0 706.0 10.0C709.7 15.0 714.3 24.2 717.0 30.0C719.7 35.8 721.2 42.5 722.0 45.0" fill="none" stroke="#1b5ee2" stroke-width="16" filter="url(#b3)" opacity="1"/></g>
<path d="M680 -8C682.5 -6.7 690.7 -3.0 695.0 0.0C699.3 3.0 702.3 5.0 706.0 10.0C709.7 15.0 714.3 24.2 717.0 30.0C719.7 35.8 721.2 42.5 722.0 45.0" fill="none" stroke="#3a84ee" stroke-width="1" stroke-linecap="round" opacity="0.9"/>
</g>
</svg>

<div id="dlg">
 <div id="title"><svg class="ico" width="30" height="26" viewBox="0 0 30 26"><ellipse cx="16" cy="19.600" rx="4.600" ry="1.500" fill="#c9cacc"/><path d="M14.500 16L17.500 16.500L17.800 19.500L14 19.300Z" fill="#d6d7da"/><path d="M10.100 6.800L20.900 7.800L20.600 16.800L9 14.900Z" fill="#2b36c2"/><path d="M12 8.800L19 9.500L18.800 14.600L11.600 13.300Z" fill="#cfdcf0"/><path d="M13.600 11.400L14.800 12.800L16.800 10" stroke="#2f8fc6" stroke-width="1.300" fill="none"/></svg><span class="t">System Configuration</span>
 <svg class="x" width="12" height="12" viewBox="0 0 12 12"><path d="M1 1L11 11M11 1L1 11" stroke="#222" stroke-width="1.1" fill="none"/></svg></div>
 <div class="tab" style="left:9px;width:48px;padding-left:4px;">General</div>
 <div class="tab" style="left:56px;width:40px;padding-left:5px;">Boot</div>
 <div class="tab sel" style="left:98px;width:54px;padding-left:5px;">Services</div>
 <div class="tab" style="left:152px;width:48px;padding-left:3.7px;">Startup</div>
 <div class="tab" style="left:199px;width:39px;padding-left:5px;">Tools</div>
 <div id="panel"></div>
 <div id="list">
  <div class="hd" style="left:0;width:193px;">Service</div>
  <div class="hd" style="left:193px;width:152px;">Manufacturer</div>
  <div class="hd" style="left:345px;width:60px;">Status</div>
  <div class="hd" style="left:405px;width:103px;">Date Disabled</div>
  <div class="row sel" style="top:25px"><i class="cb"><svg width="13" height="13" viewBox="0 0 13 13"><path d="M3.600 6.900L5.500 8.700L9.700 4.400" stroke="#d4e6f8" stroke-width="1.050" fill="none"/></svg></i><b class="hl"></b><span class="c1">AllJoyn Router Service</span><span class="c2">Microsoft Corporation</span><span class="c3">Stopped</span></div>
  <div class="row" style="top:42px"><i class="cb"><svg width="13" height="13" viewBox="0 0 13 13"><path d="M3.600 6.900L5.500 8.700L9.700 4.400" stroke="#d4e6f8" stroke-width="1.050" fill="none"/></svg></i><b class="hl"></b><span class="c1">Application Layer Gateway Service</span><span class="c2">Microsoft Corporation</span><span class="c3">Stopped</span></div>
  <div class="row" style="top:59px"><i class="cb"><svg width="13" height="13" viewBox="0 0 13 13"><path d="M3.600 6.900L5.500 8.700L9.700 4.400" stroke="#d4e6f8" stroke-width="1.050" fill="none"/></svg></i><b class="hl"></b><span class="c1">Application Identity</span><span class="c2">Microsoft Corporation</span><span class="c3">Stopped</span></div>
  <div class="row" style="top:76px"><i class="cb"><svg width="13" height="13" viewBox="0 0 13 13"><path d="M3.600 6.900L5.500 8.700L9.700 4.400" stroke="#d4e6f8" stroke-width="1.050" fill="none"/></svg></i><b class="hl"></b><span class="c1">Application Management</span><span class="c2">Microsoft Corporation</span><span class="c3">Stopped</span></div>
  <div class="row" style="top:93px"><i class="cb"><svg width="13" height="13" viewBox="0 0 13 13"><path d="M3.600 6.900L5.500 8.700L9.700 4.400" stroke="#d4e6f8" stroke-width="1.050" fill="none"/></svg></i><b class="hl"></b><span class="c1">App Readiness</span><span class="c2">Microsoft Corporation</span><span class="c3">Stopped</span></div>
  <div class="row" style="top:110px"><i class="cb"><svg width="13" height="13" viewBox="0 0 13 13"><path d="M3.600 6.900L5.500 8.700L9.700 4.400" stroke="#d4e6f8" stroke-width="1.050" fill="none"/></svg></i><b class="hl"></b><span class="c1">AppX Deployment Service (AppX<i class="el">...</i></span><span class="c2">Microsoft Corporation</span><span class="c3">Running</span></div>
  <div class="row" style="top:127px"><i class="cb"><svg width="13" height="13" viewBox="0 0 13 13"><path d="M3.600 6.900L5.500 8.700L9.700 4.400" stroke="#d4e6f8" stroke-width="1.050" fill="none"/></svg></i><b class="hl"></b><span class="c1">Windows Audio Endpoint Builder</span><span class="c2">Microsoft Corporation</span><span class="c3">Running</span></div>
  <div class="row" style="top:144px"><i class="cb"><svg width="13" height="13" viewBox="0 0 13 13"><path d="M3.600 6.900L5.500 8.700L9.700 4.400" stroke="#d4e6f8" stroke-width="1.050" fill="none"/></svg></i><b class="hl"></b><span class="c1">Windows Audio</span><span class="c2">Microsoft Corporation</span><span class="c3">Running</span></div>
  <div class="row" style="top:161px"><i class="cb"><svg width="13" height="13" viewBox="0 0 13 13"><path d="M3.600 6.900L5.500 8.700L9.700 4.400" stroke="#d4e6f8" stroke-width="1.050" fill="none"/></svg></i><b class="hl"></b><span class="c1">Cellular Time</span><span class="c2">Microsoft Corporation</span><span class="c3">Stopped</span></div>
  <div class="row" style="top:178px"><i class="cb"><svg width="13" height="13" viewBox="0 0 13 13"><path d="M3.600 6.900L5.500 8.700L9.700 4.400" stroke="#d4e6f8" stroke-width="1.050" fill="none"/></svg></i><b class="hl"></b><span class="c1">ActiveX Installer (AxInstSV)</span><span class="c2">Microsoft Corporation</span><span class="c3">Stopped</span></div>
  <div class="row" style="top:195px"><i class="cb"><svg width="13" height="13" viewBox="0 0 13 13"><path d="M3.600 6.900L5.500 8.700L9.700 4.400" stroke="#d4e6f8" stroke-width="1.050" fill="none"/></svg></i><b class="hl"></b><span class="c1">BitLocker Drive Encryption Service</span><span class="c2">Microsoft Corporation</span><span class="c3">Stopped</span></div>
  <div class="row" style="top:212px"><i class="cb"><svg width="13" height="13" viewBox="0 0 13 13"><path d="M3.600 6.900L5.500 8.700L9.700 4.400" stroke="#d4e6f8" stroke-width="1.050" fill="none"/></svg></i><b class="hl"></b><span class="c1">Base Filtering Engine</span><span class="c2">Microsoft Corporation</span><span class="c3">Running</span></div>
  <div id="sb"><i></i></div>
 </div>
 <div class="note">Note that some secure Microsoft services may not be disabled.</div>
 <div class="btn dis" style="left:368px;top:301px;width:84px;"><u>E</u>nable all</div>
 <div class="btn" style="left:461px;top:301px;width:85px;"><u>D</u>isable all</div>
 <i class="hcb"></i><div class="hide"><u>H</u>ide all Microsoft services</div>
 <div class="sep"></div>
 <div class="btn def b2" style="left:246px;top:354px;width:74px;">OK</div>
 <div class="btn b2" style="left:327px;top:354px;width:74px;">Cancel</div>
 <div class="btn dis b2" style="left:408px;top:354px;width:74px;"><u>A</u>pply</div>
 <div class="btn b2" style="left:489px;top:354px;width:74px;">Help</div>
</div>
<svg id="arrow" width="919" height="504" viewBox="0 0 919 504"><g filter="drop-shadow(1px 1.500px 1px rgba(40,0,0,.35))"><path d="M59 280L158 349" stroke="#e8403d" stroke-width="4.200" stroke-linecap="round" fill="none"/><path d="M173.500 358L148 353.500L157 347.500L160 338Z" fill="#e8403d"/></g></svg>
</body></html>
